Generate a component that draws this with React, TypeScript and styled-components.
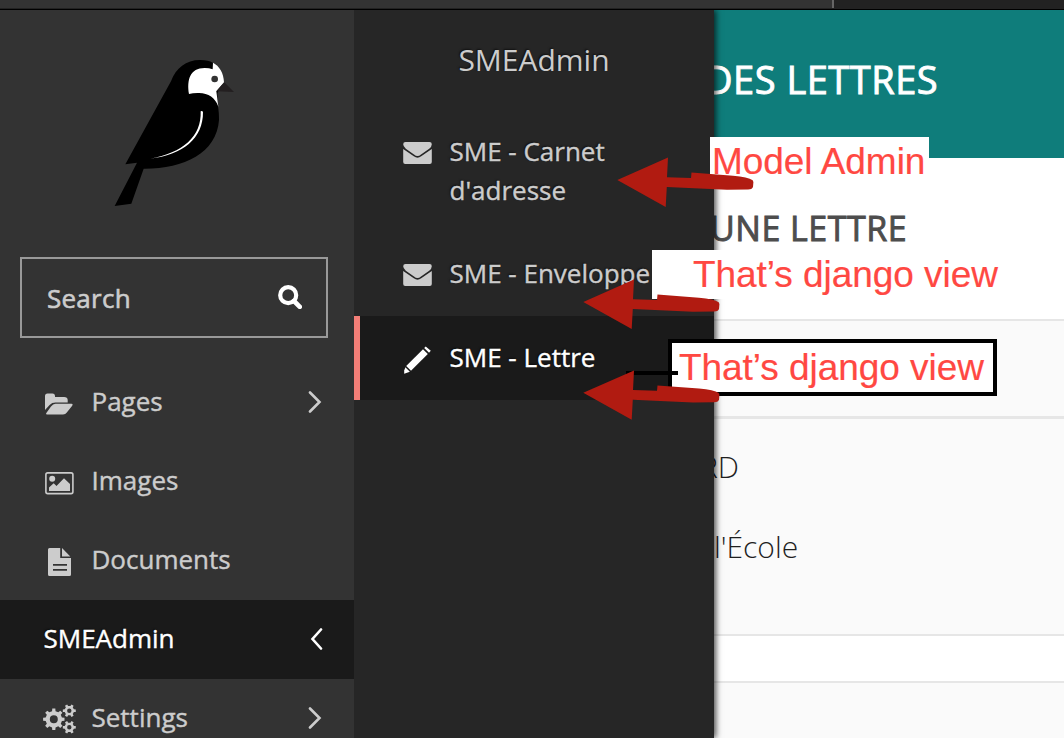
import React from 'react';
import styled, { createGlobalStyle } from 'styled-components';

const GlobalStyle = createGlobalStyle`
  * { box-sizing: border-box; }
  body { margin: 0; overflow: hidden; background: #fff; font-family: 'Open Sans', sans-serif; }
`;

const Page = styled.div`
  position: relative;
  display: flex;
  flex-direction: column;
  width: 1064px;
  height: 738px;
  overflow: hidden;
`;

const TabStrip = styled.div`
  display: flex;
  flex: none;
  height: 10px;
  background: #222;
  border-bottom: 1px solid #000;
`;

const ActiveTab = styled.div`
  width: 834px;
  height: 8px;
  background: #333;
  border-right: 2px solid #666;
`;

const Body = styled.div`
  display: flex;
  flex: 1;
  min-height: 0;
`;

const Sidebar = styled.nav`
  flex: none;
  width: 354px;
  background: #333;
  overflow: hidden;
`;

const LogoArea = styled.div`
  height: 247px;
  padding: 30px 0 0 100px;
  svg { display: block; }
`;

const SearchBox = styled.div`
  display: flex;
  align-items: center;
  justify-content: space-between;
  width: 308px;
  height: 81px;
  margin: 0 0 25px 20px;
  padding: 0 24px 0 25px;
  border: 2px solid #999;
  color: #ccc;
  font-size: 26px;
  svg { display: block; margin-top: -2px; }
`;

const SearchLabel = styled.span`
  letter-spacing: 0.25px;
  -webkit-text-stroke: 0.6px currentColor;
`;

const MenuItem = styled.a<{ $active?: boolean }>`
  display: flex;
  align-items: center;
  height: 79px;
  padding: 0 30px 2px ${p => (p.$active ? 43.5 : 42)}px;
  background: ${p => (p.$active ? '#1a1a1a' : 'transparent')};
  color: ${p => (p.$active ? '#fff' : '#ccc')};
  font-size: 26px;
  line-height: 39px;
  text-shadow: ${p => (p.$active ? '-1px -1px 2px rgba(0,0,0,.6)' : 'none')};
`;

const MenuIcon = styled.span<{ $drop: number }>`
  display: flex;
  flex: none;
  width: 49.5px;
  svg { display: block; margin-top: ${p => p.$drop}px; }
`;

const MenuLabel = styled.span`
  flex: 1;
  -webkit-text-stroke: 0.4px currentColor;
`;

const Submenu = styled.aside`
  position: relative;
  z-index: 1;
  flex: none;
  width: 360px;
  background: #262626;
  box-shadow: 2px 0 6px rgba(0, 0, 0, 0.7);
  clip-path: inset(0 -14px 0 0);
  color: #ccc;
  text-shadow: -1px -1px 2px rgba(0, 0, 0, 0.6);
`;

const SubmenuTitle = styled.h2`
  height: 99px;
  margin: 0;
  padding-top: 29px;
  font-size: 30px;
  font-weight: 400;
  line-height: 42px;
  text-align: center;
`;

const SubmenuItem = styled.a<{ $active?: boolean; $wrapped?: boolean }>`
  display: flex;
  padding: ${p => (p.$wrapped ? '23px 0 22px' : '22px 0 23px')};
  padding-left: ${p => (p.$active ? 43 : 49)}px;
  border-left: ${p => (p.$active ? '6px solid #f37e77' : '0')};
  background: ${p => (p.$active ? '#1a1a1a' : 'transparent')};
  color: ${p => (p.$active ? '#fff' : '#ccc')};
  font-size: 26px;
  line-height: 39px;
`;

const SubmenuIcon = styled.span<{ $drop?: number }>`
  flex: none;
  width: 46.5px;
  svg { display: block; margin-top: ${p => p.$drop ?? 10}px; }
`;

const SubmenuLabel = styled.span`
  width: 205px;
  -webkit-text-stroke: 0.4px currentColor;
`;

const Content = styled.main`
  flex: 1;
  min-width: 0;
  overflow: hidden;
  white-space: nowrap;
`;

const Header = styled.header`
  height: 148px;
  padding-top: 43px;
  background: #0f7d7b;
`;

const PageTitle = styled.h1`
  margin: 0 0 0 -9px;
  color: #fff;
  font-size: 38px;
  font-weight: 400;
  letter-spacing: 0.5px;
  line-height: 52px;
  -webkit-text-stroke: 0.9px currentColor;
`;

const FormHeading = styled.div`
  height: 161px;
  padding-top: 47px;
`;

const FormTitle = styled.h2`
  margin: 0 0 0 -4px;
  color: #4d4d4d;
  font-size: 34px;
  font-weight: 400;
  letter-spacing: 0.5px;
  line-height: 46px;
  -webkit-text-stroke: 0.9px currentColor;
`;

const Band = styled.section<{ $height: number; $line: number; $white?: boolean }>`
  height: ${p => p.$height}px;
  padding-top: 27px;
  border-top: ${p => p.$line}px solid #e6e6e6;
  background: ${p => (p.$white ? '#fff' : '#fafafa')};
`;

const FieldText = styled.p<{ $shift: number }>`
  margin: 0 0 0 ${p => p.$shift}px;
  height: 80px;
  color: #1f1f1f;
  font-size: 30px;
  font-weight: 300;
  line-height: 41px;
`;

const Note = styled.div<{ $x: number; $y: number; $w: number; $h: number; $pad: number; $framed?: boolean }>`
  position: absolute;
  z-index: 2;
  left: ${p => p.$x}px;
  top: ${p => p.$y}px;
  width: ${p => p.$w}px;
  height: ${p => p.$h}px;
  padding-left: ${p => p.$pad}px;
  border: ${p => (p.$framed ? '4px solid #000' : '0')};
  background: #fff;
  color: #ff4842;
  font-family: 'Liberation Sans', sans-serif;
  font-size: 37px;
  letter-spacing: -0.05px;
  line-height: 49px;
  white-space: nowrap;
  -webkit-text-stroke: 0.2px currentColor;
`;

const Marks = styled.svg`
  position: absolute;
  z-index: 3;
  left: 0;
  top: 0;
  pointer-events: none;
`;

const Bird = () => (
  <svg width="150" height="180" viewBox="0 0 450 540">
    <path d="M76 373 L213 124 C228 84 258 60 300 60 C318 60 330 63 338 68 L370 125 L352 160 L354 200 Q357 215 357 240 C350 340 250 387 131 386 L94 491 L44 498 L111 368 Z" fill="#000" />
    <path d="M267 162 C260 120 270 84 314 84 Q328 84 338 88 L339 68 C358 78 371 98 372 127 L349 154 L355 200 C346 172 322 157 292 159 Q278 159 267 162 Z" fill="#fff" />
    <circle cx="344" cy="117" r="10" fill="#333" />
    <path d="M373 127 L402 156 L349 154 Z" fill="#231f20" />
    <path d="M302 214 Q305 211 309 215 C310 296 248 344 150 356 C249 339 305 289 302 214 Z" fill="#fff" />
  </svg>
);

const SearchIcon = () => (
  <svg width="24" height="24" viewBox="0 0 24 24" fill="none" stroke="#fff">
    <circle cx="10.2" cy="10.2" r="8" strokeWidth="4.2" />
    <path d="M16 16 L21.8 21.8" strokeWidth="4.6" strokeLinecap="round" />
  </svg>
);

const FolderIcon = () => (
  <svg width="34" height="24" viewBox="0 0 34 24" fill="currentColor">
    <path d="M3 18 V5 Q3 2.5 5.5 2.5 H10.5 Q12.8 2.5 13 4.8 V6 H22 Q25.7 6 25.7 9 V11.6 H13.5 Q10 11.6 7.6 14 L3 19 Z" />
    <path d="M13.5 12.8 H29.5 Q31.5 13 30 15 L24.8 21.5 Q23.5 23.5 21 23.5 H5 Q3.2 23.2 4.5 21.7 L9 15.5 Q11 12.8 13.5 12.8 Z" />
  </svg>
);

const ImageIcon = () => (
  <svg width="34" height="24" viewBox="0 0 34 24">
    <rect x="3.9" y="1.9" width="27" height="20.7" rx="1.8" fill="none" stroke="currentColor" strokeWidth="1.6" />
    <circle cx="10.2" cy="7.7" r="3" fill="currentColor" />
    <path d="M7 20 V16.5 L11.7 12.2 L14.5 15 L22 7.2 L28 13 V20 Z" fill="currentColor" />
  </svg>
);

const DocumentIcon = () => (
  <svg width="34" height="28" viewBox="0 0 34 28" fill="currentColor">
    <path fillRule="evenodd" d="M7.5 0 H18.2 V10 H29 V26.5 Q29 28 27.5 28 H7.5 Q6 28 6 26.5 V1.5 Q6 0 7.5 0 Z M11 16 V17.8 H25 V16 Z M11 21 V22.8 H25 V21 Z" />
    <path d="M20 0 L28.3 8.4 H20 Z" />
  </svg>
);

const gearPath = (cx: number, cy: number, outer: number, inner: number, teeth: number, offset: number) => {
  const step = (Math.PI * 2) / teeth;
  const points: string[] = [];
  for (let i = 0; i < teeth; i++) {
    const a = i * step + offset;
    [[-0.27, inner], [-0.18, outer], [0.18, outer], [0.27, inner]].forEach(([t, r]) => {
      points.push(`${(cx + Math.cos(a + t * step) * r).toFixed(2)} ${(cy + Math.sin(a + t * step) * r).toFixed(2)}`);
    });
  }
  return `M${points.join('L')}Z`;
};

const holePath = (cx: number, cy: number, r: number) =>
  `M${cx - r} ${cy}a${r} ${r} 0 1 0 ${2 * r} 0a${r} ${r} 0 1 0 ${-2 * r} 0Z`;

const GearsIcon = () => (
  <svg width="34" height="30" viewBox="0 0 34 30" fill="currentColor" fillRule="evenodd">
    <path d={gearPath(11.8, 15.3, 10.8, 8.3, 8, 0) + holePath(11.8, 15.3, 4)} />
    <path d={gearPath(27.3, 6.7, 6.6, 4.8, 6, 0) + holePath(27.3, 6.7, 2.2)} />
    <path d={gearPath(27.3, 23.3, 6.6, 4.8, 6, 0) + holePath(27.3, 23.3, 2.2)} />
  </svg>
);

const Chevron = ({ left }: { left?: boolean }) => (
  <svg width="16" height="22" viewBox="0 0 16 22" fill="none" stroke="currentColor" strokeWidth="2.6" strokeLinecap="round">
    <path d={left ? 'M13 1.5 L4.5 11 L13 20.5' : 'M2 1.5 L11.5 11 L2 20.5'} />
  </svg>
);

const EnvelopeIcon = () => (
  <svg width="30" height="22" viewBox="0 0 30 22" fill="currentColor">
    <path d="M.2 2.3 Q.2 0 2.5 0 H26.5 Q28.8 0 28.8 2.3 Q28.8 4.7 26.2 6.7 L18 12.5 Q14.5 15.5 11 12.5 L2.8 6.7 Q.2 4.5 .2 2.3 Z" />
    <path d="M.2 7 L10.8 14.3 Q14.5 17.2 18.2 14.3 L28.8 7 V20 Q28.8 22 26.8 22 H2.2 Q.2 22 .2 20 Z" />
  </svg>
);

const PencilIcon = () => (
  <svg width="30" height="29" viewBox="0 0 30 29" fill="currentColor">
    <path d="M3.2 20 L20 3.2 L24.8 8 L8 24.8 Z" />
    <path d="M21.2 2 L22.7 .5 L27.8 4.8 L26 6.8 Z" />
    <path d="M2.4 21.3 L6.9 25.8 L1.2 27.8 V24.5 Z" />
  </svg>
);

const ARROW =
  'M617.3 180 L668 157.6 L667 177.3 L691 178 L691.5 172.6 L733 175.7 Q748 177 752.7 180.3 L753.4 182 L753 187 Q752 189.5 748 189.5 L727 189.7 L666.8 187 L665.7 207 Z';

const items = [
  { label: 'Pages', icon: <FolderIcon />, drop: 3, arrow: true },
  { label: 'Images', icon: <ImageIcon />, drop: 5 },
  { label: 'Documents', icon: <DocumentIcon />, drop: 5 },
  { label: 'SMEAdmin', active: true, arrow: true },
  { label: 'Settings', icon: <GearsIcon />, drop: 3, arrow: true },
];

export default function App() {
  return (
    <>
      <GlobalStyle />
      <Page>
        <TabStrip><ActiveTab /></TabStrip>
        <Body>
          <Sidebar>
            <LogoArea><Bird /></LogoArea>
            <SearchBox>
              <SearchLabel>Search</SearchLabel>
              <SearchIcon />
            </SearchBox>
            {items.map(item => (
              <MenuItem key={item.label} $active={item.active}>
                {item.icon && <MenuIcon $drop={item.drop}>{item.icon}</MenuIcon>}
                <MenuLabel>{item.label}</MenuLabel>
                {item.arrow && <Chevron left={item.active} />}
              </MenuItem>
            ))}
          </Sidebar>
          <Submenu>
            <SubmenuTitle>SMEAdmin</SubmenuTitle>
            <SubmenuItem $wrapped>
              <SubmenuIcon><EnvelopeIcon /></SubmenuIcon>
              <SubmenuLabel>SME - Carnet d'adresse</SubmenuLabel>
            </SubmenuItem>
            <SubmenuItem>
              <SubmenuIcon><EnvelopeIcon /></SubmenuIcon>
              <SubmenuLabel>SME - Enveloppe</SubmenuLabel>
            </SubmenuItem>
            <SubmenuItem $active>
              <SubmenuIcon $drop={8}><PencilIcon /></SubmenuIcon>
              <SubmenuLabel>SME - Lettre</SubmenuLabel>
            </SubmenuItem>
          </Submenu>
          <Content>
            <Header><PageTitle>DES LETTRES</PageTitle></Header>
            <FormHeading><FormTitle>UNE LETTRE</FormTitle></FormHeading>
            <Band $height={97} $line={2} />
            <Band $height={218} $line={3}>
              <FieldText $shift={-14}>RD</FieldText>
              <FieldText $shift={0}>l'École</FieldText>
            </Band>
            <Band $height={47} $line={2} $white />
            <Band $height={60} $line={2} />
          </Content>
        </Body>
        <Note $x={710} $y={137} $w={219} $h={49} $pad={2}>Model Admin</Note>
        <Note $x={652} $y={250} $w={350} $h={49} $pad={41}>That’s django view</Note>
        <Note $x={668} $y={339} $w={329} $h={57} $pad={7} $framed>That’s django view</Note>
        <Marks width="1064" height="738" viewBox="0 0 1064 738">
          <path d="M626 373 H678" stroke="#000" strokeWidth="4" />
          <g fill="#b11b11">
            <path d={ARROW} />
            <path d={ARROW} transform="translate(-34 122)" />
            <path d={ARROW} transform="translate(-34 212.8)" />
          </g>
        </Marks>
      </Page>
    </>
  );
}
